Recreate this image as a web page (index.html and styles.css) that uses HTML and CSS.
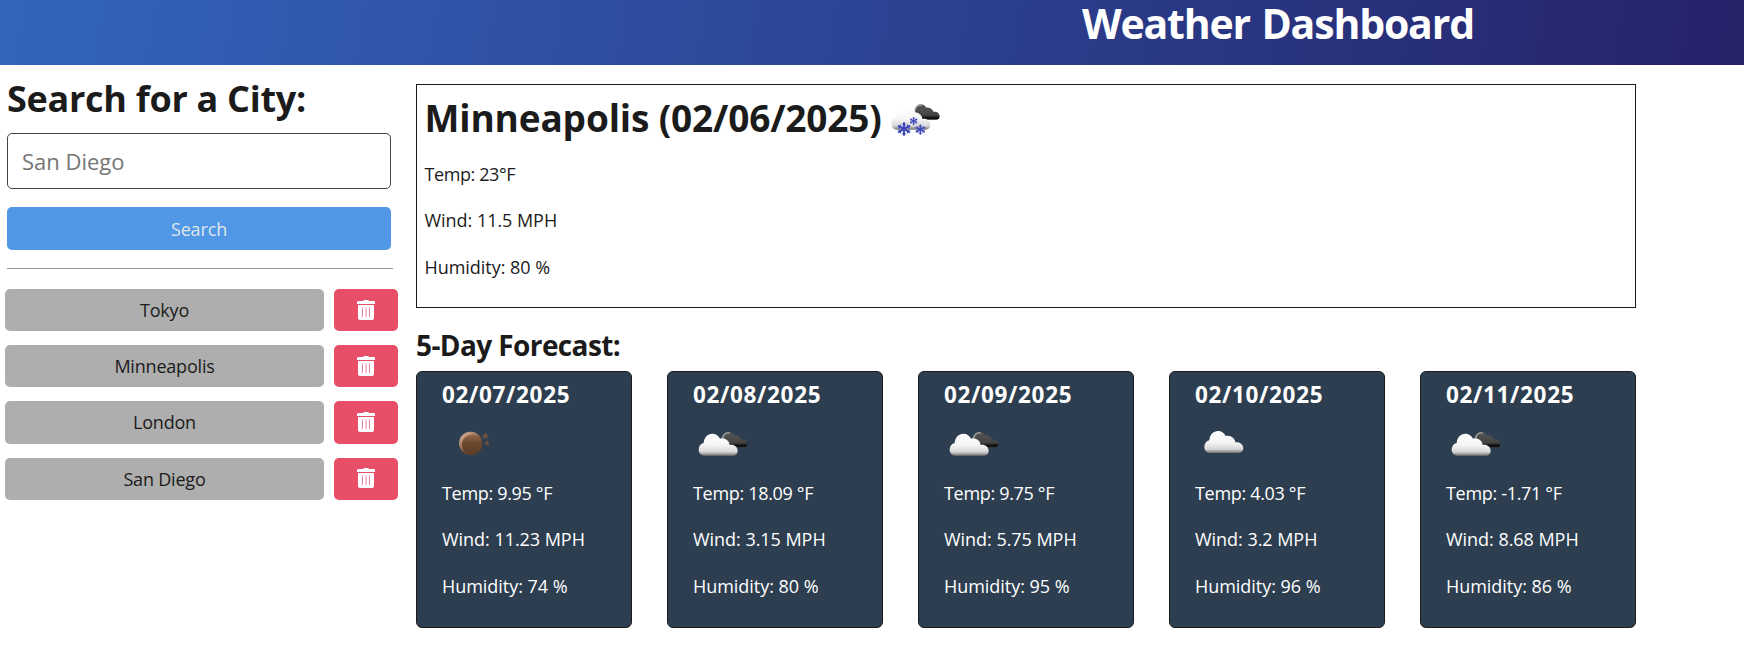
FILE: index.html
```html
<!DOCTYPE html>
<html lang="en">
<head>
<meta charset="utf-8">
<title>Weather Dashboard</title>
<link rel="stylesheet" href="styles.css">
</head>
<body>
<svg class="defs" width="0" height="0" aria-hidden="true">
  <defs>
    <linearGradient id="white" x1="0" y1="0" x2="0" y2="1"><stop offset="0" stop-color="#fff"/><stop offset=".5" stop-color="#f6f6f6"/><stop offset=".82" stop-color="#d8d8d8"/><stop offset="1" stop-color="#747474"/></linearGradient>
    <linearGradient id="dark" x1="0" y1="0" x2="0" y2="1"><stop offset="0" stop-color="#555"/><stop offset=".7" stop-color="#444"/><stop offset=".9" stop-color="#080808"/><stop offset="1" stop-color="#222"/></linearGradient>
    <linearGradient id="bronze" x1="0" y1="0" x2="0" y2="1"><stop offset="0" stop-color="#94694c"/><stop offset=".4" stop-color="#6b4930"/><stop offset="1" stop-color="#5d3d28"/></linearGradient>
    <linearGradient id="rim" x1="0" y1="0" x2=".8" y2="1"><stop offset="0" stop-color="#f0c6ad"/><stop offset=".6" stop-color="#7b553b"/><stop offset="1" stop-color="#50331f"/></linearGradient>
    <symbol id="cloud" viewBox="0 0 180 150"><path fill="url(#white)" d="M43 110C32 110 26 101 26 91C26 82 32 74 41 72C42 55 53 44 67 44C78 44 86 50 90 59C104 55 118 65 119 78C131 75 143 84 143 95C143 105 136 110 126 110Z"/></symbol>
    <symbol id="darkcloud" viewBox="0 0 180 150"><path fill="url(#dark)" d="M98 60C98 48 105 39 115 39C124 39 129 43 132 49C143 46 151 54 154 62C164 59 172 67 172 75C172 82 168 85 161 85H105Z"/><path d="M98 58C99 46 107 40 119 42" fill="none" stroke="#aaa" stroke-width="4"/></symbol>
    <symbol id="trash" viewBox="0 0 18 20"><path fill="#fff" d="M0 1.8Q0 1 1 1H6L6.7 0H11.3L12 1H17Q18 1 18 1.8V4H0ZM1 5H17V18Q17 20 15 20H3Q1 20 1 18Z"/><path d="M5.5 7.5V17M9 7.5V17M12.5 7.5V17" stroke="#ee7891" stroke-width=".9"/></symbol>
    <g id="flake" stroke="#3e46bc" stroke-width="6"><path d="M0-20V20M-18-10L18 10M-18 10L18-10"/><path d="M-6-16L0-10L6-16M-6 16L0 10L6 16M-17-3L-9-5L-11-13M17 3L9 5L11 13M-17 3L-9 5L-11 13M17-3L9-5L11-13" fill="none" stroke-width="3"/></g>
  </defs>
</svg>
<header class="header"><h1 class="title">Weather Dashboard</h1></header>
<div class="layout">
  <aside class="sidebar">
    <h2 class="search-title">Search for a City:</h2>
    <input class="field" type="text" placeholder="San Diego">
    <button class="search">Search</button>
    <hr class="rule">
    <div class="history">
      <button class="city">Tokyo</button><button class="delete" aria-label="Delete"><svg><use href="#trash"/></svg></button>
      <button class="city">Minneapolis</button><button class="delete" aria-label="Delete"><svg><use href="#trash"/></svg></button>
      <button class="city">London</button><button class="delete" aria-label="Delete"><svg><use href="#trash"/></svg></button>
      <button class="city">San Diego</button><button class="delete" aria-label="Delete"><svg><use href="#trash"/></svg></button>
    </div>
  </aside>
  <main class="main">
    <section class="today">
      <h2 class="today-title"><span>Minneapolis (02/06/2025)</span>
        <svg class="icon" viewBox="0 0 180 150">
          <g transform="translate(-2 3)"><use href="#darkcloud" x="3" y="-11" width="180" height="150"/><use href="#cloud" x="4" y="-6" width="180" height="150"/>
          <use href="#flake" transform="translate(68 102)"/><use href="#flake" transform="translate(97 78) scale(.6)"/><use href="#flake" transform="translate(117 104) scale(.76)"/></g>
        </svg>
      </h2>
      <p class="stat temp">Temp: 23°F</p><p class="stat">Wind: 11.5 MPH</p><p class="stat">Humidity: 80 %</p>
    </section>
    <h3 class="forecast-title">5-Day Forecast:</h3>
    <section class="forecast">
      <article class="card"><h4 class="date">02/07/2025</h4>
        <svg class="icon" viewBox="0 0 180 150"><g transform="translate(-6 0)"><circle cx="92" cy="73" r="35" fill="url(#rim)"/><circle cx="96" cy="77" r="30" fill="url(#bronze)"/><path fill="#74523c" d="M136 40l3 7 7 1-5 5 2 7-7-4-7 4 2-7-5-5 7-1zM141 63l2 5 6 1-4 4 1 6-5-3-5 3 1-6-4-4 6-1z"/></g></svg>
        <p class="stat temp">Temp: 9.95 °F</p><p class="stat">Wind: 11.23 MPH</p><p class="stat">Humidity: 74 %</p></article>
      <article class="card"><h4 class="date">02/08/2025</h4>
        <svg class="icon" viewBox="0 0 180 150"><use href="#darkcloud" x="-9" width="180" height="150"/><use href="#cloud" x="-9" width="180" height="150"/></svg>
        <p class="stat temp">Temp: 18.09 °F</p><p class="stat">Wind: 3.15 MPH</p><p class="stat">Humidity: 80 %</p></article>
      <article class="card"><h4 class="date">02/09/2025</h4>
        <svg class="icon" viewBox="0 0 180 150"><use href="#darkcloud" x="-9" width="180" height="150"/><use href="#cloud" x="-9" width="180" height="150"/></svg>
        <p class="stat temp">Temp: 9.75 °F</p><p class="stat">Wind: 5.75 MPH</p><p class="stat">Humidity: 95 %</p></article>
      <article class="card"><h4 class="date">02/10/2025</h4>
        <svg class="icon" viewBox="0 0 180 150"><use href="#cloud" x="2" y="-8" width="180" height="150"/></svg>
        <p class="stat temp">Temp: 4.03 °F</p><p class="stat">Wind: 3.2 MPH</p><p class="stat">Humidity: 96 %</p></article>
      <article class="card"><h4 class="date">02/11/2025</h4>
        <svg class="icon" viewBox="0 0 180 150"><use href="#darkcloud" x="-9" width="180" height="150"/><use href="#cloud" x="-9" width="180" height="150"/></svg>
        <p class="stat temp">Temp: -1.71 °F</p><p class="stat">Wind: 8.68 MPH</p><p class="stat">Humidity: 86 %</p></article>
    </section>
  </main>
</div>
</body>
</html>
```
FILE: styles.css
```css
* { box-sizing: border-box; }
body { margin: 0; background: #fff; color: #1b1b1b; font-family: "Open Sans", "Noto Sans", sans-serif; font-size: 18px; }
h1, h2, h3, h4, p { margin: 0; }
h1, h2, h3, h4 { font-weight: 700; }
button { border: 0; padding: 0; border-radius: 5px; font: inherit; }
.defs { display: block; }
.header { height: 65px; padding-left: 1082px; background: linear-gradient(100deg, #3365bd, #252269); color: #fff; }
.title { font-size: 41px; line-height: 46px; letter-spacing: -1.18px; word-spacing: 2px; white-space: nowrap; }
.layout { display: grid; grid-template-columns: 398px 1220px; column-gap: 18px; }
.sidebar { padding: 12px 0 0 7px; }
.search-title { font-size: 36px; line-height: 44px; margin-bottom: 12px; letter-spacing: -.28px; white-space: nowrap; }
.field { display: block; width: 384px; height: 56px; padding: 0 14px; border: 1px solid #444; border-radius: 5px; font: 22px "Open Sans", sans-serif; }
.field::placeholder { color: #757575; }
.search { display: block; width: 384px; height: 43px; margin-top: 18px; background: #5097e5; color: #dfe6ec; letter-spacing: -.15px; }
.rule { width: 386px; height: 1px; margin: 18px 0 20px; border: 0; background: #999; }
.history { display: grid; grid-template-columns: 319px 64px; grid-auto-rows: 42.2px; gap: 14px 10px; margin-left: -2px; }
.city { background: #aeaeae; color: #1b1b1b; letter-spacing: -.2px; }
.delete { display: flex; align-items: center; justify-content: center; padding-bottom: 1px; background: #e84e67; }
.delete svg { width: 18px; height: 20px; }
.main { padding-top: 19px; }
.today { height: 224px; padding: 9px 8px 0 7.5px; border: 1px solid #1b1b1b; }
.today-title { display: flex; height: 66px; font-size: 37px; line-height: 48px; letter-spacing: -.15px; white-space: nowrap; }
.icon { display: block; width: 60px; height: 50px; }
.stat { line-height: 28px; margin-bottom: 18.4px; letter-spacing: -.04px; white-space: nowrap; }
.temp { letter-spacing: -.32px; }
.today .temp { letter-spacing: -.4px; }
.forecast-title { margin: 19px 0 8px; font-size: 28px; line-height: 36px; letter-spacing: -.6px; }
.forecast { display: grid; grid-template-columns: repeat(5, 216px); gap: 35px; }
.card { height: 257px; padding: 8px 0 0 25px; border: 1px solid #1b1b1b; border-radius: 6px; background: #2d3e50; color: #fff; }
.date { font-size: 22.5px; line-height: 29px; letter-spacing: .67px; }
.card .icon { margin: 10px 0; }
```
